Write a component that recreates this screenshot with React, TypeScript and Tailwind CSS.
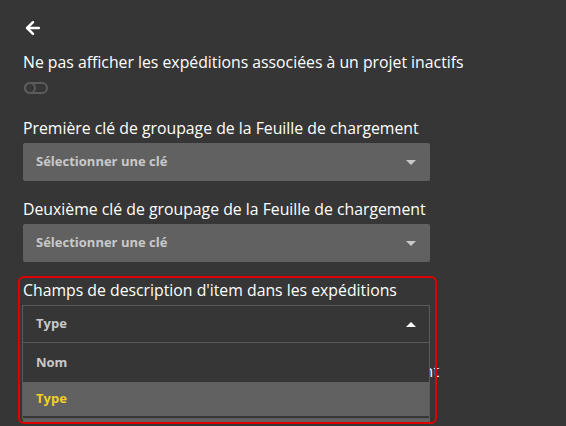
import { ArrowLeft } from "lucide-react";

function Caret({ up = false, className = "" }: { up?: boolean; className?: string }) {
  return (
    <svg width="10" height="5" viewBox="0 0 10 5" className={className}>
      {up ? <path d="M0 5 L5 0 L10 5 Z" fill="currentColor" /> : <path d="M0 0 L10 0 L5 5 Z" fill="currentColor" />}
    </svg>
  );
}

function SelectField({ label, placeholder, wide = false }: { label: string; placeholder: string; wide?: boolean }) {
  return (
    <div className="flex flex-col">
      <label className={`text-[15.8px] leading-[22px] text-white ${wide ? "tracking-[0.3px]" : ""}`}>{label}</label>
      <button className="mt-[4px] flex h-[38px] w-[407px] items-center justify-between rounded-[2px] bg-[#616161] pl-[13px] pr-[14px] text-left">
        <span className="text-[13px] font-bold text-[#c9c9c9]">{placeholder}</span>
        <Caret className="text-[#c9c9c9]" />
      </button>
    </div>
  );
}

export default function App() {
  return (
    <div
      className="h-[426px] w-[566px] overflow-hidden bg-[#363636] pl-[23px] pt-[17px] text-white"
      style={{ fontFamily: '"Open Sans", "Noto Sans", sans-serif' }}
    >
      <button className="flex h-[22px] w-[22px] items-center text-white">
        <ArrowLeft size={20} strokeWidth={3} />
      </button>

      <div className="mt-[12px] text-[15.8px] leading-[22px]">
        Ne pas afficher les expéditions associées à un projet inactifs
      </div>
      {/* toggle, off */}
      <div className="relative ml-px mt-[9px] h-[12px] w-[24px] rounded-full border-2 border-[#5c5c5c]">
        <span className="absolute left-[-2px] top-[-2px] h-[12px] w-[12px] rounded-full border-2 border-[#5c5c5c]" />
      </div>

      <div className="mt-[23px] flex flex-col gap-[17px]">
        <SelectField label="Première clé de groupage de la Feuille de chargement" placeholder="Sélectionner une clé" />
        <SelectField label="Deuxième clé de groupage de la Feuille de chargement" placeholder="Sélectionner une clé" />

        {/* open select */}
        <div className="relative z-10 flex flex-col">
          <div className="pointer-events-none absolute left-[-5px] top-[-3px] z-20 h-[148px] w-[419px] rounded-[6px] border-2 border-[#e00000]" />
          <label className="text-[15.8px] leading-[22px] text-white">Champs de description d'item dans les expéditions</label>
          <div className="relative ml-[-1px] mt-[4px] w-[408px]">
            <button className="flex h-[38px] w-full items-center justify-between border border-[#5a5a5a] bg-[#363636] pl-[13px] pr-[13px] text-left">
              <span className="text-[13px] font-bold text-[#c9c9c9]">Type</span>
              <Caret up className="text-white" />
            </button>
            <ul className="absolute left-0 top-full z-10 w-full border border-t-0 border-[#5a5a5a] bg-[#363636] pb-[2px]">
              <li className="flex h-[39px] items-center pl-[13px] text-[13px] font-bold text-[#c9c9c9]">Nom</li>
              <li className="flex h-[34px] items-center bg-[#616161] pl-[13px] text-[13px] font-bold text-[#f2d024]">Type</li>
            </ul>
          </div>
        </div>

        <SelectField label="Troisième clé de groupage de la Feuille de chargement" placeholder="Sélectionner une clé" wide />
      </div>
    </div>
  );
}
